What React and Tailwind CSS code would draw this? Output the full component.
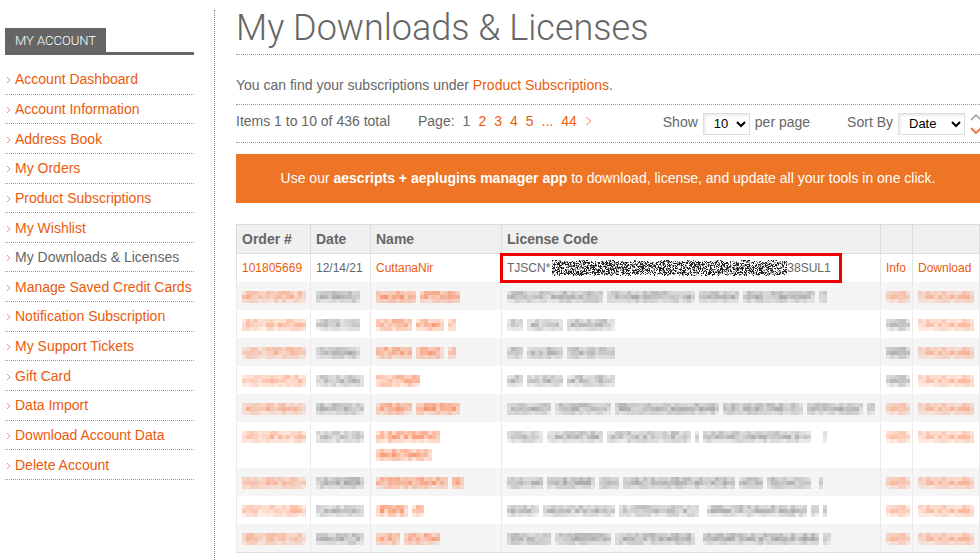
import React from 'react';

const links = [
  'Account Dashboard',
  'Account Information',
  'Address Book',
  'My Orders',
  'Product Subscriptions',
  'My Wishlist',
  'My Downloads & Licenses',
  'Manage Saved Credit Cards',
  'Notification Subscription',
  'My Support Tickets',
  'Gift Card',
  'Data Import',
  'Download Account Data',
  'Delete Account',
];

function makeRandom(seed) {
  let s = seed * 7919 + 17;
  return () => {
    s = (s * 1664525 + 1013904223) % 4294967296;
    return s / 4294967296;
  };
}

const CELL = 4;

// Censored text: each line is a list of [start column, column count] words.
function Mosaic({ lines, seed, orange = false, strength = 1 }) {
  const rand = makeRandom(seed);
  const cols = Math.max(...lines.flat().map(([start, count]) => start + count));
  const cells = [];
  lines.forEach((words, line) => {
    words.forEach(([start, count]) => {
      for (let c = 0; c < count; c++) {
        const edge = c === 0 || c === count - 1 ? 0.75 : 1;
        [0.34, 0.42, 0.24].forEach((base, r) => {
          const o = base * edge * (0.5 + rand() * 0.75) * strength;
          cells.push(
            <rect
              key={`${line}-${start + c}-${r}`}
              x={(start + c) * CELL}
              y={line * 18 + r * CELL}
              width={CELL}
              height={CELL}
              opacity={o.toFixed(2)}
            />
          );
        });
      }
    });
  });
  return (
    <svg
      aria-hidden="true"
      width={cols * CELL}
      height={(lines.length - 1) * 18 + 12}
      shapeRendering="crispEdges"
      className={orange ? 'block fill-[#f86a30]' : 'block fill-[#555555]'}
    >
      {cells}
    </svg>
  );
}

// Black and white static scribbled over part of the licence code.
function Static() {
  const rand = makeRandom(5);
  let dark = '';
  let pale = '';
  for (let x = 0; x < 235; x++) {
    const top = Math.floor(x / 9) % 3 === 0 ? 0 : 1 + Math.floor(rand() * 2);
    const bottom = 16 - Math.floor(rand() * 3);
    for (let y = top; y < bottom; y++) {
      const v = rand();
      if (v < 0.4) dark += `M${x} ${y}h1v1h-1z`;
      else if (v < 0.62) pale += `M${x} ${y}h1v1h-1z`;
    }
  }
  return (
    <svg aria-hidden="true" width="235" height="16" shapeRendering="crispEdges" className="ml-[2px] shrink-0">
      <path d={dark} fill="#222222" />
      <path d={pale} fill="#999999" />
    </svg>
  );
}

const required = [[0, 4], [5, 9], [15, 12]];
const orders = [
  { name: [[[0, 10], [11, 10]]], code: [[0, 10], [10, 14], [25, 4], [29, 18], [48, 10], [59, 18], [78, 2]], info: true },
  { name: [[[0, 9], [10, 7], [18, 2]]], code: required },
  { name: [[[0, 9], [10, 7], [18, 2]]], code: required },
  { name: [[[0, 11]]], code: required },
  { name: [[[0, 9], [10, 11]]], code: [[0, 11], [12, 14], [27, 26], [54, 20], [75, 14], [90, 2]], info: true },
  { name: [[[0, 16]], [[0, 14]]], code: [[0, 9], [10, 14], [25, 21], [47, 1], [49, 27], [79, 1]], info: true },
  { name: [[[0, 18], [19, 3]]], code: [[0, 9], [10, 12], [23, 5], [29, 28], [58, 6], [65, 11], [78, 1]], info: true },
  { name: [[[0, 8], [9, 3]]], code: [[0, 8], [9, 18], [28, 20], [50, 25], [76, 2], [79, 1]], info: true },
  { name: [[[0, 6], [7, 9]]], code: [[0, 11], [12, 14], [27, 20], [49, 29], [79, 2]], info: true },
];

function Select({ id, label, options, className }) {
  return (
    <span className="relative inline-flex">
      <select
        id={id}
        aria-label={label}
        className={`h-[22px] appearance-none border border-[#dddddd] bg-white pl-[10px] text-[13px] text-black shadow-[inset_2px_2px_2px_#eeeeee] ${className}`}
      >
        {options.map((o) => (
          <option key={o}>{o}</option>
        ))}
      </select>
      <svg
        aria-hidden="true"
        width="10"
        height="7"
        viewBox="0 0 10 7"
        className="pointer-events-none absolute top-2 right-1"
      >
        <path d="M1 1l4 4 4-4" fill="none" stroke="#000" strokeWidth="2" />
      </svg>
    </span>
  );
}

const headCell = 'h-[29px] border border-[#dcdcdc] px-[5px] text-left align-middle text-[14px] font-bold';
const cell = 'h-7 border-x border-[#e4e4e4] p-0 pl-[5px] align-middle whitespace-nowrap';
const maskCell = 'h-7 border-x border-[#eaeaea] p-0 pt-[9px] pb-[7px] pl-[5px] align-top';

export default function App() {
  return (
    <div className="flex min-h-screen overflow-hidden bg-white font-['Liberation_Sans',Arial,sans-serif] text-[14px] leading-[18px] text-[#666666]">
      <aside className="w-[194px] shrink-0 pt-7 pl-[5px]">
        <div className="flex border-b-[3px] border-[#666666]">
          <h2 className="h-6 bg-[#666666] px-[10px] font-['Roboto',sans-serif] text-[13px] leading-[26px] font-light text-white">
            MY ACCOUNT
          </h2>
        </div>
        <nav aria-label="My account" className="pt-[10px]">
          <ul className="grid h-[415px] auto-rows-fr">
            {links.map((text) => (
              <li key={text} className="flex items-center border-b border-dotted border-[#999999]">
                <svg aria-hidden="true" width="10" height="8" viewBox="0 0 10 8" className="mt-[2px] shrink-0">
                  <path d="M2 1l3 3-3 3" fill="none" stroke="#f0906a" />
                </svg>
                <a
                  href="#"
                  className={
                    text === 'My Downloads & Licenses'
                      ? 'whitespace-nowrap text-[#666666]'
                      : 'whitespace-nowrap text-[#ea5b0c]'
                  }
                >
                  {text}
                </a>
              </li>
            ))}
          </ul>
        </nav>
      </aside>
      <div className="mt-[10px] ml-5 w-[22px] shrink-0 border-l border-dotted border-[#888888]" />

      <main className="min-w-0 flex-1">
        <h1 className="h-[55px] border-b border-dotted border-[#999999] pt-1 font-['Roboto',sans-serif] text-[36px] leading-[48px] font-light whitespace-nowrap">
          My Downloads &amp; Licenses
        </h1>
        <p className="pt-[21px] pb-[10px]">
          You can find your subscriptions under{' '}
          <a href="#" className="text-[#ea5b0c]">Product Subscriptions</a>.
        </p>
        <div className="flex h-[39px] items-center border-y border-dotted border-[#999999] whitespace-nowrap">
          <p className="w-[182px] pb-[6px]">Items 1 to 10 of 436 total</p>
          <nav aria-label="Pages" className="flex items-center gap-2 pb-[6px]">
            <span>Page:</span>
            <span>1</span>
            {['2', '3', '4', '5', '...', '44'].map((p) => (
              <a key={p} href="#" className="text-[#ea5b0c]">{p}</a>
            ))}
            <a href="#" aria-label="Next page">
              <svg aria-hidden="true" width="7" height="10" viewBox="0 0 7 10">
                <path d="M1 1l5 4-5 4" fill="none" stroke="#f0906a" />
              </svg>
            </a>
          </nav>
          <div className="-mr-[2px] ml-auto flex items-center gap-[5px]">
            <label htmlFor="limit" className="pb-[3px]">Show</label>
            <Select id="limit" label="Show per page" options={['10', '20', '50']} className="w-[47px]" />
            <span className="pb-[3px]">per page</span>
            <label htmlFor="sort" className="ml-8 pb-[3px]">Sort By</label>
            <Select id="sort" label="Sort By" options={['Date', 'Name']} className="w-[67px]" />
            <button type="button" aria-label="Sort direction" className="shrink-0">
              <svg aria-hidden="true" width="12" height="22" viewBox="0 0 12 22">
                <path d="M1 7l5-5 5 5" fill="none" stroke="#999" strokeWidth="1.5" />
                <path d="M1 15l5 5 5-5" fill="none" stroke="#ef7d4b" strokeWidth="2" />
              </svg>
            </button>
          </div>
        </div>

        <p className="mt-[11px] bg-[#ee7526] pt-[15px] pb-4 text-center text-white">
          Use our <strong>aescripts + aeplugins manager app</strong> to download, license, and update all your tools in one click.
        </p>

        <table className="mt-[21px] w-full table-fixed border-collapse border border-[#dcdcdc] text-[12px]">
          <colgroup>
            <col className="w-[74px]" />
            <col className="w-[60px]" />
            <col className="w-[131px]" />
            <col />
            <col className="w-8" />
            <col className="w-[67px]" />
          </colgroup>
          <thead className="bg-[#f0f0f0]">
            <tr>
              <th className={headCell}>Order #</th>
              <th className={headCell}>Date</th>
              <th className={headCell}>Name</th>
              <th className={headCell}>License Code</th>
              <td className={headCell} />
              <td className={headCell} />
            </tr>
          </thead>
          <tbody>
            <tr>
              <td className={cell}><a href="#" className="text-[#ea5b0c]">101805669</a></td>
              <td className={cell}>12/14/21</td>
              <td className={cell}><a href="#" className="text-[#ea5b0c]">CuttanaNir</a></td>
              <td className={`relative ${cell}`}>
                <div className="flex items-center">
                  <span>TJSCN*</span>
                  <Static />
                  <span>38SUL1</span>
                </div>
                <span className="pointer-events-none absolute -top-px -bottom-px -left-[2px] w-[342px] border-[3px] border-[#ee0000]" />
              </td>
              <td className={cell}><a href="#" className="text-[#ea5b0c]">Info</a></td>
              <td className={cell}><a href="#" className="text-[#ea5b0c]">Download</a></td>
            </tr>
            {orders.map((o, i) => (
              <tr key={i} className="even:bg-[#f5f5f5]">
                <td className={maskCell}><Mosaic orange seed={i + 11} lines={[[[0, 5], [5, 11]]]} /></td>
                <td className={maskCell}><Mosaic seed={i + 31} strength={0.9} lines={[[[0, i < 3 ? 11 : 12]]]} /></td>
                <td className={maskCell}><Mosaic orange strength={1.3} seed={i + 51} lines={o.name} /></td>
                <td className={maskCell}><Mosaic seed={i + 71} strength={0.9} lines={[o.code]} /></td>
                <td className={maskCell}><Mosaic orange={o.info} seed={91} lines={[[[0, 6]]]} /></td>
                <td className={maskCell}><Mosaic orange seed={97} lines={[[[0, 14]]]} /></td>
              </tr>
            ))}
          </tbody>
        </table>
      </main>
    </div>
  );
}
